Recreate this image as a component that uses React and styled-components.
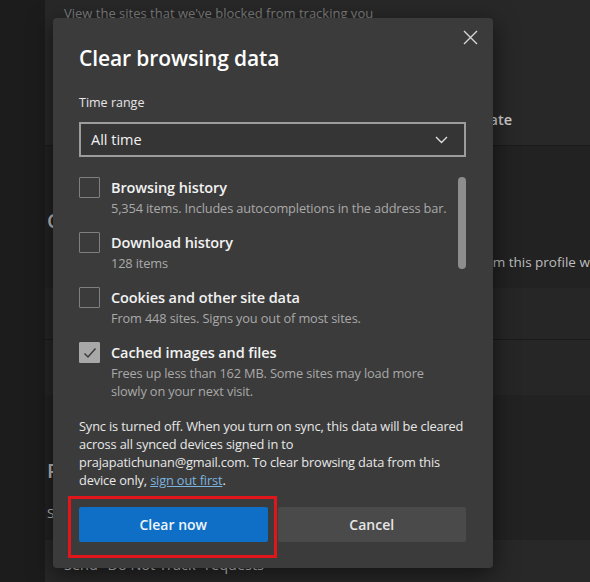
import React from "react"
import styled, { createGlobalStyle } from "styled-components"

const GlobalStyle = createGlobalStyle`
  html, body {
    margin: 0;
    padding: 0;
    background: #1c1c1c;
    font-family: "Open Sans", "Noto Sans", sans-serif;
    overflow: hidden;
  }
`

const Page = styled.div`
  position: relative;
  width: 590px;
  height: 582px;
  display: flex;
  overflow: hidden;
`

const Rail = styled.div`
  width: 45px;
  flex-shrink: 0;
  background: #1c1c1c;
`

const Settings = styled.div`
  flex: 1;
  display: flex;
  flex-direction: column;
  background: #222222;
`

const Card = styled.div`
  background: ${p => p.$bg || "#282828"};
  height: ${p => p.$h}px;
  flex-shrink: 0;
  display: flex;
  flex-direction: column;
  padding: ${p => p.$pad || "0 0 0 19px"};
  border-bottom: ${p => (p.$line ? "1px solid #1b1b1b" : "none")};
  box-sizing: border-box;
  color: #c9c9c9;
  font-size: 13px;
`

const Muted = styled.div`
  color: #7e7e7e;
  font-size: 13px;
  line-height: 18px;
  white-space: nowrap;
`

const CardTitle = styled.div`
  font-size: 14.5px;
  font-weight: ${p => p.$weight || 600};
  color: #cfcfcf;
  white-space: nowrap;
  text-align: ${p => p.$align || "right"};
  width: ${p => p.$w}px;
`

const Heading = styled.div`
  font-size: 20px;
  font-weight: 600;
  color: #bdbdbd;
  white-space: nowrap;
  line-height: 26px;
`

const BodyText = styled.div`
  color: #bdbdbd;
  font-size: 13.5px;
  line-height: 18px;
  white-space: nowrap;
  text-align: ${p => p.$align || "right"};
  width: ${p => p.$w}px;
  margin-top: ${p => p.$mt}px;
`

const Dialog = styled.div`
  position: absolute;
  left: 53px;
  top: 18px;
  width: 440px;
  height: 550px;
  box-sizing: border-box;
  background: #3b3b3b;
  border-radius: 4px;
  box-shadow: 0 6px 24px rgba(0, 0, 0, 0.55);
  padding: 25px 27px 26px 26px;
  display: flex;
  flex-direction: column;
`

const TitleRow = styled.div`
  display: flex;
  justify-content: space-between;
  align-items: flex-start;
`

const Title = styled.h1`
  margin: 0;
  font-size: 21px;
  line-height: 30px;
  font-weight: 600;
  color: #ffffff;
  letter-spacing: -0.1px;
`

const CloseBtn = styled.button`
  background: none;
  border: none;
  padding: 0;
  margin: -14px -12px 0 0;
  width: 16px;
  height: 16px;
  display: flex;
  align-items: center;
  justify-content: center;
  cursor: pointer;
`

const Label = styled.div`
  margin-top: 21px;
  font-size: 12.5px;
  line-height: 18px;
  color: #e6e6e6;
  font-weight: 500;
`

const Select = styled.div`
  margin-top: 10px;
  height: 35px;
  box-sizing: border-box;
  border: 2px solid #9c9c9c;
  background: #353535;
  display: flex;
  align-items: center;
  justify-content: space-between;
  padding: 0 16px 0 10px;
  color: #f2f2f2;
  font-size: 14.5px;
`

const ListArea = styled.div`
  position: relative;
  margin-top: 10px;
  height: 234px;
  overflow: hidden;
`

const Scrollbar = styled.div`
  position: absolute;
  right: 0;
  top: 10px;
  width: 8px;
  height: 92px;
  border-radius: 4px;
  background: #8d8d8d;
`

const Item = styled.div`
  display: flex;
  gap: 11px;
  padding-top: 10px;
  height: 55px;
  box-sizing: border-box;
`

const Box = styled.div`
  width: 21px;
  height: 21px;
  box-sizing: border-box;
  flex-shrink: 0;
  border: 1.5px solid ${p => (p.$checked ? "#a8a8a8" : "#7f7f7f")};
  background: ${p => (p.$checked ? "#a8a8a8" : "transparent")};
  border-radius: 1px;
  display: flex;
  align-items: center;
  justify-content: center;
`

const ItemText = styled.div`
  display: flex;
  flex-direction: column;
`

const ItemTitle = styled.div`
  font-size: 14.5px;
  line-height: 22px;
  font-weight: 600;
  color: #f2f2f2;
  letter-spacing: -0.1px;
`

const ItemSub = styled.div`
  font-size: 12.8px;
  line-height: 18px;
  color: #a9a9a9;
  letter-spacing: -0.15px;
  &:first-of-type {
    margin-top: 1px;
  }
`

const SyncNote = styled.div`
  margin-top: 16px;
  display: flex;
  flex-direction: column;
`

const SyncLine = styled.div`
  font-size: 12.8px;
  line-height: 18px;
  color: #e8e8e8;
  letter-spacing: -0.15px;
  white-space: nowrap;
`

const Link = styled.a`
  color: #7db3df;
  text-decoration: underline;
`

const Buttons = styled.div`
  margin-top: auto;
  display: grid;
  grid-template-columns: 1fr 1fr;
  gap: 10px;
`

const Button = styled.button`
  height: 35px;
  border: none;
  border-radius: 2px;
  font-family: inherit;
  font-size: 14px;
  font-weight: 600;
  background: ${p => (p.$primary ? "#0f6fc6" : "#4a4a4a")};
  color: ${p => (p.$primary ? "#eef5fc" : "#e6e6e6")};
  cursor: pointer;
`

const Highlight = styled.div`
  position: absolute;
  left: 68px;
  top: 496px;
  width: 209px;
  height: 62px;
  box-sizing: border-box;
  border: 3px solid #e0161b;
  pointer-events: none;
`

const items = [
  { title: "Browsing history", sub: ["5,354 items. Includes autocompletions in the address bar."] },
  { title: "Download history", sub: ["128 items"] },
  { title: "Cookies and other site data", sub: ["From 448 sites. Signs you out of most sites."] },
  {
    title: "Cached images and files",
    sub: ["Frees up less than 162 MB. Some sites may load more", "slowly on your next visit."],
    checked: true,
  },
]

export default function App() {
  return (
    <>
      <GlobalStyle />
      <Page>
        <Rail />
        <Settings>
          <Card $h={100} $pad="4px 0 0 19px">
            <Muted>View the sites that we've blocked from tracking you</Muted>
          </Card>
          <Card $h={46} $pad="10px 0 0 0" $line>
            <CardTitle $w={467}>Always use "Strict" tracking prevention when browsing InPrivate</CardTitle>
          </Card>
          <Card $h={142} $bg="#222222" $pad="62px 0 0 2px">
            <Heading>Clear browsing data</Heading>
            <BodyText $w={627} $mt={19}>
              This includes history, passwords, cookies, and more. Only data from this profile will be deleted.
            </BodyText>
          </Card>
          <Card $h={52} $bg="#262626" $line />
          <Card $h={55} $bg="#262626" />
          <Card $h={145} $bg="#222222" $pad="63px 0 0 2px">
            <Heading>Privacy</Heading>
            <BodyText $w={380} $align="left" $mt={20}>
              Select your privacy settings for Microsoft Edge
            </BodyText>
          </Card>
          <Card $h={42} $pad="15px 0 0 19px">
            <CardTitle $w={300} $align="left" $weight={400}>
              Send "Do Not Track" requests
            </CardTitle>
          </Card>
        </Settings>

        <Dialog>
          <TitleRow>
            <Title>Clear browsing data</Title>
            <CloseBtn aria-label="Close">
              <svg width="15" height="15" viewBox="0 0 15 15">
                <path d="M1 1 L14 14 M14 1 L1 14" stroke="#d6d6d6" strokeWidth="1.4" fill="none" />
              </svg>
            </CloseBtn>
          </TitleRow>
          <Label>Time range</Label>
          <Select>
            <span>All time</span>
            <svg width="13" height="8" viewBox="0 0 13 8">
              <path d="M1 1 L6.5 6.5 L12 1" stroke="#dedede" strokeWidth="1.4" fill="none" />
            </svg>
          </Select>
          <ListArea>
            {items.map(it => (
              <Item key={it.title}>
                <Box $checked={it.checked}>
                  {it.checked && (
                    <svg width="14" height="12" viewBox="0 0 14 12">
                      <path d="M1.5 6.5 L5 10 L12.5 1.5" stroke="#3c3c3c" strokeWidth="1.5" fill="none" />
                    </svg>
                  )}
                </Box>
                <ItemText>
                  <ItemTitle>{it.title}</ItemTitle>
                  {it.sub.map(s => (
                    <ItemSub key={s}>{s}</ItemSub>
                  ))}
                </ItemText>
              </Item>
            ))}
            <Scrollbar />
          </ListArea>
          <SyncNote>
            <SyncLine>Sync is turned off. When you turn on sync, this data will be cleared</SyncLine>
            <SyncLine>across all synced devices signed in to</SyncLine>
            <SyncLine>prajapatichunan@gmail.com. To clear browsing data from this</SyncLine>
            <SyncLine>
              device only, <Link>sign out first</Link>.
            </SyncLine>
          </SyncNote>
          <Buttons>
            <Button $primary>Clear now</Button>
            <Button>Cancel</Button>
          </Buttons>
        </Dialog>
        <Highlight />
      </Page>
    </>
  )
}
